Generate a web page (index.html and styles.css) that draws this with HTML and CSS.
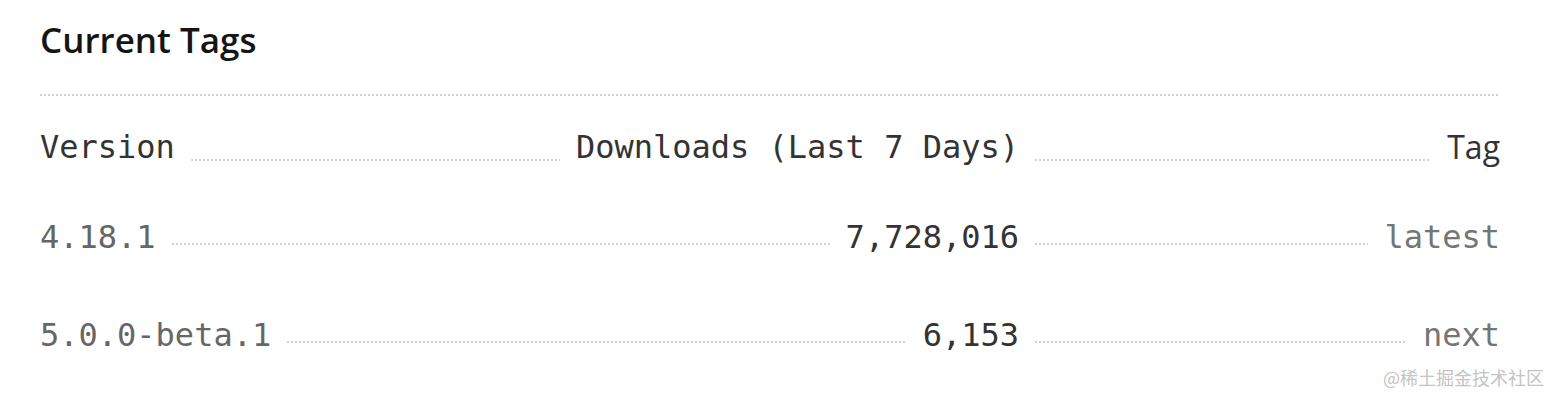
FILE: index.html
```html
<!DOCTYPE html>
<html lang="en">
<head>
    <meta charset="UTF-8">
    <meta name="viewport" content="width=device-width, initial-scale=1.0">
    <title>Current Tags</title>
    <link rel="stylesheet" href="styles.css">
</head>
<body>
    <div class="tags_con">
        <h2 class="title">Current Tags</h2>
        <div class="rule"></div>
        <div class="row head">
            <div class="main">
                <span class="version">Version</span>
                <span class="dots"></span>
                <span class="downloads">Downloads (Last 7 Days)</span>
            </div>
            <div class="side">
                <span class="dots"></span>
                <span class="tag">Tag</span>
            </div>
        </div>
        <div class="row first">
            <div class="main">
                <a class="version" href="">4.18.1</a>
                <span class="dots"></span>
                <span class="downloads">7,728,016</span>
            </div>
            <div class="side">
                <span class="dots"></span>
                <span class="tag">latest</span>
            </div>
        </div>
        <div class="row second">
            <div class="main">
                <a class="version" href="">5.0.0-beta.1</a>
                <span class="dots"></span>
                <span class="downloads">6,153</span>
            </div>
            <div class="side">
                <span class="dots"></span>
                <span class="tag">next</span>
            </div>
        </div>
    </div>
    <div class="mark">@稀土掘金技术社区</div>
</body>
</html>
```

FILE: styles.css
```css
body{
    margin: 0;
    padding: 0;
    background-color: #fff;
}
.tags_con{
    width: 1460px;
    padding: 18px 0 0 40px;
    font-family: "DejaVu Sans Mono", "Liberation Mono", monospace;
    font-size: 32px;
    line-height: 40px;
}
.title{
    margin: 0;
    font-family: "Open Sans", "Noto Sans", sans-serif;
    font-size: 35px;
    font-weight: 600;
    line-height: 44px;
    color: #151515;
}
.rule{
    height: 2px;
    margin-top: 32px;
    background-image: linear-gradient(to right, #d0d0d0 50%, transparent 50%);
    background-size: 4px 2px;
}
.row{
    display: flex;
    align-items: flex-end;
}
.head{
    margin-top: 31px;
}
.first{
    margin-top: 50px;
}
.second{
    margin-top: 58px;
}
.main{
    flex: 0 0 979px;
    display: flex;
    align-items: flex-end;
    gap: 16px;
}
.side{
    flex: 1;
    display: flex;
    align-items: flex-end;
    gap: 16px;
    padding-left: 16px;
}
.dots{
    flex: 1;
    height: 2px;
    margin-bottom: 12px;
    background-image: linear-gradient(to right, #d0d0d0 50%, transparent 50%);
    background-size: 4px 2px;
}
.head .dots{
    margin-bottom: 6px;
}
.version{
    color: #666;
    text-decoration: none;
}
.downloads{
    color: #333;
}
.head .version,
.head .downloads{
    color: #333;
}
.tag{
    color: #757575;
}
.head .tag{
    font-family: "Open Sans", "Noto Sans", sans-serif;
    color: #333;
}
.mark{
    position: absolute;
    right: 14px;
    top: 364px;
    font-family: "Noto Sans CJK SC", sans-serif;
    font-size: 18px;
    line-height: 26px;
    color: #c4c4c4;
}
```
